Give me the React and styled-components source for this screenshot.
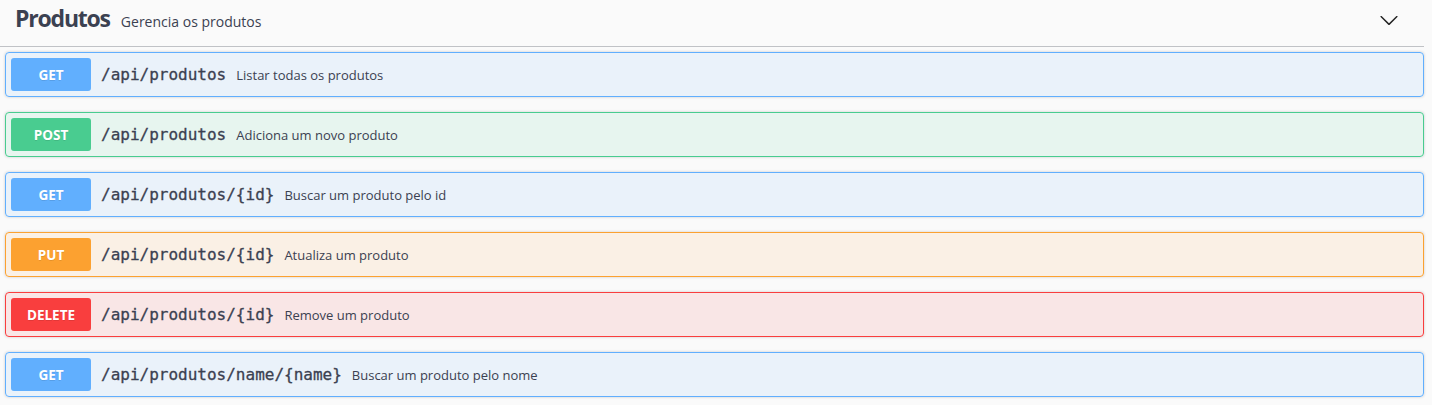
import styled, { createGlobalStyle } from "styled-components";

const GlobalStyle = createGlobalStyle`
  html, body {
    margin: 0;
    padding: 0;
    background: #fafafa;
  }
  body {
    font-family: "Open Sans", "Noto Sans", sans-serif;
    color: #3b4151;
  }
`;

const methods = {
  get: { color: "#61affe", bg: "rgba(97, 175, 254, 0.1)" },
  post: { color: "#49cc90", bg: "rgba(73, 204, 144, 0.1)" },
  put: { color: "#fca130", bg: "rgba(252, 161, 48, 0.1)" },
  delete: { color: "#f93e3e", bg: "rgba(249, 62, 62, 0.1)" },
};

const endpoints = [
  { method: "get", path: "/api/produtos", summary: "Listar todas os produtos" },
  { method: "post", path: "/api/produtos", summary: "Adiciona um novo produto" },
  { method: "get", path: "/api/produtos/{id}", summary: "Buscar um produto pelo id" },
  { method: "put", path: "/api/produtos/{id}", summary: "Atualiza um produto" },
  { method: "delete", path: "/api/produtos/{id}", summary: "Remove um produto" },
  {
    method: "get",
    path: "/api/produtos/name/{name}",
    summary: "Buscar um produto pelo nome",
  },
];

export default function App() {
  return (
    <Section>
      <GlobalStyle />
      <TagHeader>
        <TagTitle>
          <TagName>Produtos</TagName>
          <TagDescription>Gerencia os produtos</TagDescription>
        </TagTitle>
        <Toggle aria-label="collapse">
          <svg width="20" height="20" viewBox="0 0 20 20">
            <path
              fill="#222"
              d="M17.418 6.109c.272-.268.709-.268.979 0s.271.701 0 .969l-7.908 7.83c-.27.268-.707.268-.979 0l-7.908-7.83c-.27-.268-.27-.701 0-.969.271-.268.709-.268.979 0L10 13.25l7.418-7.141z"
            />
          </svg>
        </Toggle>
      </TagHeader>
      <List>
        {endpoints.map((e, i) => (
          <Operation key={i} $method={e.method}>
            <Method $method={e.method}>{e.method.toUpperCase()}</Method>
            <Path>{e.path}</Path>
            <Summary>{e.summary}</Summary>
          </Operation>
        ))}
      </List>
    </Section>
  );
}

const Section = styled.div`
  width: 1424px;
`;

const TagHeader = styled.div`
  display: flex;
  align-items: center;
  box-sizing: border-box;
  height: 47px;
  padding: 0 0 10px 15px;
  border-bottom: 1px solid rgba(59, 65, 81, 0.3);
  margin-bottom: 5px;
`;

const TagTitle = styled.div`
  display: flex;
  align-items: baseline;
`;

const TagName = styled.span`
  font-family: "Open Sans", sans-serif;
  font-size: 23px;
  font-weight: 700;
  letter-spacing: -1.2px;
  color: #3b4151;
`;

const TagDescription = styled.small`
  font-family: "Open Sans", sans-serif;
  font-size: 14px;
  color: #3b4151;
  margin-left: 11px;
`;

const Toggle = styled.button`
  margin-left: auto;
  margin-right: 25px;
  margin-top: 4px;
  border: none;
  background: none;
  padding: 0;
  display: flex;
  cursor: pointer;
`;

const List = styled.div`
  padding-left: 5px;
`;

const Operation = styled.div`
  display: flex;
  align-items: center;
  padding: 5px;
  margin-bottom: 15px;
  border: 1px solid ${(p) => methods[p.$method].color};
  border-radius: 4px;
  background: ${(p) => methods[p.$method].bg};
  box-shadow: 0 0 3px rgba(0, 0, 0, 0.19);
`;

const Method = styled.span`
  min-width: 80px;
  height: 33px;
  display: flex;
  align-items: center;
  justify-content: center;
  box-sizing: border-box;
  border-radius: 3px;
  background: ${(p) => methods[p.$method].color};
  color: #fff;
  font-family: "Open Sans", sans-serif;
  font-size: 13.5px;
  font-weight: 700;
  text-shadow: 0 1px 0 rgba(0, 0, 0, 0.1);
`;

const Path = styled.span`
  padding: 0 10px;
  font-family: "DejaVu Sans Mono", monospace;
  font-size: 16px;
  font-weight: 400;
  -webkit-text-stroke: 0.3px #3b4151;
  color: #3b4151;
`;

const Summary = styled.span`
  font-family: "Open Sans", sans-serif;
  font-size: 13px;
  color: #3b4151;
`;
